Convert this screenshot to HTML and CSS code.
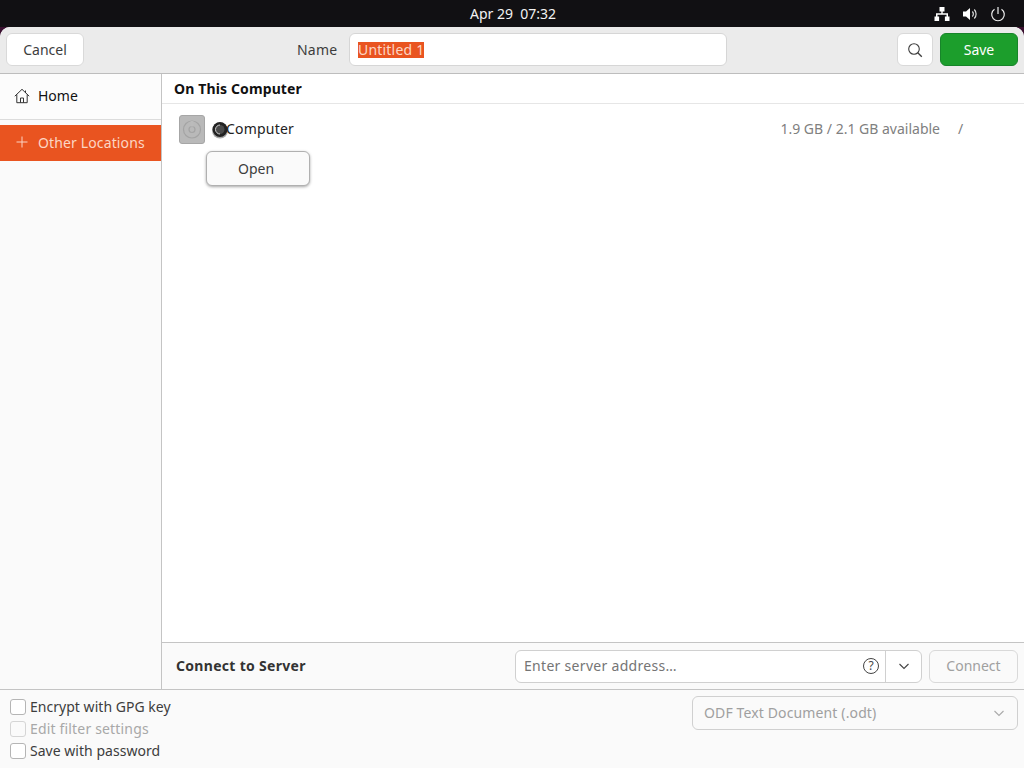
FILE: index.html
```html
<!DOCTYPE html>
<html lang="en">
<head>
<meta charset="utf-8">
<title>Save</title>
<link rel="stylesheet" href="styles.css">
</head>
<body>
<div class="topbar">
  <div class="clock">Apr 29&nbsp;&nbsp;07:32</div>
  <div class="tray">
    <svg class="tray-icon" viewBox="0 0 16 16"><path d="M5.500 1h5v4.500H8.700V7.300H14v3.200h1.500V15h-4.600v-4.500h1.600V8.700h-9v1.800h1.600V15H.5v-4.500H2V7.300h5.300V5.500H5.500z" fill="#fff"/></svg>
    <svg class="tray-icon" viewBox="0 0 16 16"><path d="M1 5.500h3L8 2v12l-4-3.500H1z" fill="#fff"/><path d="M10.300 5.500a3.500 3.500 0 0 1 0 5M12.300 3.500a6.500 6.500 0 0 1 0 9" fill="none" stroke="#ddd" stroke-width="1.200"/></svg>
    <svg class="tray-icon" viewBox="0 0 16 16"><path d="M4.500 3.200a6.300 6.300 0 1 0 7 0M8 1v7" fill="none" stroke="#eee" stroke-width="1.200"/></svg>
  </div>
</div>
<div class="window">
  <header class="header">
    <button class="btn cancel">Cancel</button>
    <div class="name-group">
      <span class="name-label">Name</span>
      <div class="entry name-entry"><span class="selected">Untitled 1</span></div>
    </div>
    <div class="header-end">
      <button class="btn search">
        <svg class="icon16" viewBox="0 0 16 16"><circle cx="7" cy="7" r="5.300" fill="none" stroke="#3d3d3d" stroke-width="1.100"/><path d="M10.800 10.800l4 4" stroke="#3d3d3d" stroke-width="1.300"/></svg>
      </button>
      <button class="btn save">Save</button>
    </div>
  </header>
  <div class="body">
    <aside class="sidebar">
      <div class="side-row home">
        <svg class="icon16" viewBox="0 0 16 16"><path d="M.8 8.200L8 1.300l7.200 6.900M2.800 6.500v8.200h10.400V6.500M6.500 14.700V10h3v4.700M11.500 2.500v2.500" fill="none" stroke="#333" stroke-width="1"/></svg>
        <span>Home</span>
      </div>
      <div class="side-row other">
        <svg class="icon16" viewBox="0 0 16 16"><path d="M8 2.500v11M2.500 8h11" stroke="#fbd3c3" stroke-width="1"/></svg>
        <span>Other Locations</span>
      </div>
    </aside>
    <main class="main">
      <div class="content">
        <h2 class="section-title">On This Computer</h2>
        <div class="place-row">
          <div class="disk">
            <svg class="disk-svg" viewBox="0 0 24 27"><circle cx="12" cy="13.500" r="8.500" fill="none" stroke="#a4a4a4" stroke-width="1.200"/><circle cx="12" cy="13.500" r="3" fill="none" stroke="#a4a4a4" stroke-width="1.200"/><path d="M12 5v5.500" stroke="#bbb" stroke-width="3"/></svg>
          </div>
          <svg class="spinner" viewBox="0 0 18 18"><circle cx="9" cy="9.500" r="8" fill="#a8a8a8"/><circle cx="9" cy="8.500" r="7.500" fill="#222"/><circle cx="9" cy="8.500" r="4.500" fill="#4a4a4a"/><path d="M9 4a4.500 4.500 0 0 0 0 9" fill="none" stroke="#d0d0d0" stroke-width="1"/></svg>
          <span class="place-name">Computer</span>
          <span class="place-space">1.9 GB / 2.1 GB available</span>
          <span class="place-path">/</span>
        </div>
        <button class="btn open">Open</button>
      </div>
      <div class="connect">
        <span class="connect-label">Connect to Server</span>
        <div class="connect-controls">
          <div class="address">
            <span class="address-text">Enter server address…</span>
            <svg class="help" viewBox="0 0 18 18"><circle cx="9" cy="9" r="7.500" fill="none" stroke="#444" stroke-width="1"/><text x="9" y="13" text-anchor="middle" class="help-mark">?</text></svg>
            <span class="address-drop"><svg class="chev" viewBox="0 0 12 12"><path d="M1.500 4l4.500 4.500L10.500 4" fill="none" stroke="#444" stroke-width="1.100"/></svg></span>
          </div>
          <button class="btn connect-btn">Connect</button>
        </div>
      </div>
    </main>
  </div>
  <footer class="footer">
    <div class="checks">
      <label class="check"><span class="box"></span><span class="check-text">Encrypt with GPG key</span></label>
      <label class="check disabled"><span class="box"></span><span class="check-text">Edit filter settings</span></label>
      <label class="check"><span class="box"></span><span class="check-text">Save with password</span></label>
    </div>
    <div class="filetype">
      <span class="filetype-text">ODF Text Document (.odt)</span>
      <svg class="chev" viewBox="0 0 12 12"><path d="M1.500 4l4.500 4.500L10.500 4" fill="none" stroke="#aaa" stroke-width="1.100"/></svg>
    </div>
  </footer>
</div>
</body>
</html>
```
FILE: styles.css
```css
* { box-sizing: border-box; }
html, body { margin: 0; height: 100%; }
body {
  width: 1024px;
  height: 768px;
  overflow: hidden;
  background: #3a1030;
  font-family: "Noto Sans", "Open Sans", sans-serif;
  font-size: 14px;
  color: #3d3d3d;
  display: flex;
  flex-direction: column;
}
.topbar {
  height: 27px;
  flex: none;
  background: #111013;
  color: #f2f2f2;
  display: flex;
  align-items: center;
  justify-content: flex-end;
  padding-right: 18px;
  position: relative;
}
.clock {
  position: absolute;
  left: 2px;
  right: 0;
  text-align: center;
  font-size: 14px;
}
.tray { display: flex; gap: 12px; align-items: center; }
.tray-icon { width: 16px; height: 16px; display: block; }
.window {
  flex: 1;
  display: flex;
  flex-direction: column;
  background: #fafafa;
  border-radius: 10px 10px 0 0;
  overflow: hidden;
  min-height: 0;
}
.btn {
  font: inherit;
  color: #3d3d3d;
  background: #fff;
  border: 1px solid #d9d9d9;
  border-radius: 6px;
  padding: 0 0 1px;
  height: 33px;
}
.header {
  height: 47px;
  flex: none;
  background: #ebebeb;
  border-bottom: 1px solid #bdbdbd;
  display: flex;
  align-items: flex-start;
  padding: 6px 6px 0;
  position: relative;
}
.cancel { width: 78px; }
.name-group {
  display: flex;
  align-items: center;
  margin-left: 213px;
  height: 33px;
}
.name-label { width: 52px; letter-spacing: 0.2px; }
.entry {
  background: #fff;
  border: 1px solid #d6d6d6;
  border-radius: 6px;
  height: 33px;
  display: flex;
  align-items: center;
}
.name-entry { width: 378px; padding-left: 8px; }
.selected {
  background: #e95420;
  color: #fcd6c4;
  line-height: 16px;
  font-size: 14px;
  letter-spacing: 0.2px;
}
.header-end {
  margin-left: auto;
  display: flex;
  gap: 7px;
}
.search {
  width: 36px;
  display: flex;
  align-items: center;
  justify-content: center;
  padding: 0;
}
.icon16 { width: 16px; height: 16px; display: block; flex: none; }
.save {
  width: 78px;
  background: #1c9e2c;
  border-color: #17852a;
  color: #fff;
}
.body {
  flex: 1;
  display: flex;
  min-height: 0;
}
.sidebar {
  width: 162px;
  flex: none;
  border-right: 1px solid #c4c4c4;
  background: #fafafa;
}
.side-row {
  display: flex;
  align-items: center;
  gap: 8px;
  padding-left: 14px;
}
.home {
  height: 46px;
  color: #111;
  border-bottom: 1px solid #dcdcdc;
  background: #fcfcfc;
  padding-bottom: 2px;
}
.other {
  height: 36px;
  margin-top: 5px;
  background: #e95420;
  color: #fcd6c4;
  letter-spacing: 0.13px;
  padding-bottom: 2px;
}
.main {
  flex: 1;
  display: flex;
  flex-direction: column;
  min-width: 0;
}
.content {
  flex: 1;
  background: #fff;
  border-bottom: 1px solid #c4c4c4;
}
.section-title {
  margin: 0;
  height: 30px;
  padding-left: 12px;
  font-size: 14px;
  font-weight: 700;
  line-height: 29px;
  letter-spacing: 0.13px;
  color: #111;
  border-bottom: 1px solid #e6e6e6;
}
.place-row {
  display: flex;
  align-items: center;
  height: 29px;
  margin-top: 11px;
  padding-left: 17px;
  padding-bottom: 0;
  position: relative;
}
.disk {
  width: 26px;
  height: 29px;
  background: #b9b9b9;
  border: 1px solid #a6a6a6;
  border-radius: 3px;
  flex: none;
}
.disk-svg { display: block; width: 24px; height: 27px; }
.spinner {
  position: absolute;
  left: 49px;
  top: 6px;
  width: 18px;
  height: 18px;
}
.place-name {
  margin-left: 21px;
  margin-bottom: 2px;
  color: #222;
  letter-spacing: 0.2px;
  position: relative;
}
.place-space { margin-left: auto; margin-bottom: 2px; color: #808080; }
.place-path { width: 84px; padding-left: 18px; margin-bottom: 2px; color: #808080; }
.open {
  display: block;
  width: 104px;
  height: 35px;
  margin: 7px 0 0 44px;
  padding-right: 4px;
  background: #fafafa;
  border: 1px solid #b0b0b0;
  box-shadow: 0 1px 3px rgba(0, 0, 0, 0.35);
}
.connect {
  height: 46px;
  flex: none;
  display: flex;
  align-items: center;
  justify-content: space-between;
  padding: 0 6px 0 14px;
  background: #fafafa;
}
.connect-label { font-weight: 700; color: #333; letter-spacing: 0.3px; margin-bottom: 2px; }
.connect-controls { display: flex; gap: 7px; }
.address {
  width: 407px;
  height: 33px;
  display: flex;
  align-items: center;
  background: #fff;
  border: 1px solid #d0d0d0;
  border-radius: 6px;
  padding-left: 8px;
}
.address-text { flex: 1; color: #757575; letter-spacing: 0.3px; margin-bottom: 2px; }
.help { width: 18px; height: 18px; margin-right: 5px; display: block; }
.help-mark { font-size: 12px; fill: #444; }
.address-drop {
  width: 36px;
  height: 100%;
  border-left: 1px solid #d0d0d0;
  display: flex;
  align-items: center;
  justify-content: center;
}
.chev { width: 12px; height: 12px; display: block; }
.connect-btn {
  width: 89px;
  background: #fafafa;
  color: #a0a0a0;
}
.footer {
  height: 79px;
  flex: none;
  border-top: 1px solid #c4c4c4;
  display: flex;
  justify-content: space-between;
  padding: 6px 6px 0 10px;
  background: #fafafa;
}
.checks { display: flex; flex-direction: column; }
.check {
  display: flex;
  align-items: center;
  gap: 4px;
  height: 22px;
  color: #3d3d3d;
}
.check-text { margin-bottom: 2px; letter-spacing: 0.03px; }
.box {
  width: 16px;
  height: 16px;
  border: 1px solid #b5b5b5;
  border-radius: 3px;
  background: #fff;
  flex: none;
}
.disabled { color: #a8a8a8; }
.disabled .check-text { letter-spacing: 0.17px; }
.disabled .box { border-color: #d5d5d5; background: #fafafa; }
.filetype {
  width: 326px;
  height: 34px;
  border: 1px solid #d0d0d0;
  border-radius: 6px;
  display: flex;
  align-items: center;
  justify-content: space-between;
  padding: 0 12px 0 11px;
  color: #a0a0a0;
}
.filetype-text { letter-spacing: 0.13px; margin-bottom: 2px; }
```
